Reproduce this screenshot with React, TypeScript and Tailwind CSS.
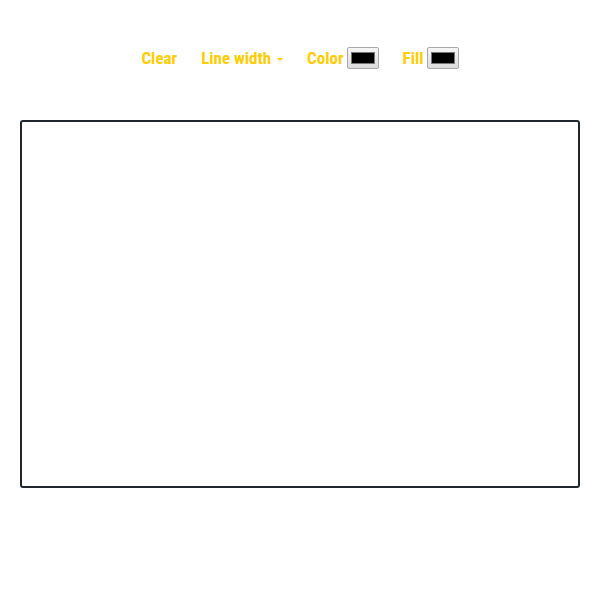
import React from "react";

function Swatch() {
  return (
    <div className="w-[32px] h-[22px] rounded-[2px] border border-[#a9a9a9] bg-gradient-to-b from-[#f6f6f6] to-[#dcdcdc] flex items-center justify-center">
      <div className="w-[24px] h-[12px] bg-black border border-[#777]" />
    </div>
  );
}

export default function App() {
  return (
    <div className="w-[600px] h-[600px] bg-white flex flex-col items-center font-['Roboto',sans-serif] [font-stretch:condensed]">
      <div className="mt-[45px] h-[26px] flex items-center gap-[24px] text-[17px] font-bold text-[#ffcc00] leading-none">
        <span>Clear</span>
        <span className="flex items-center">
          Line width
          <span className="ml-[6px] mt-[2px] w-0 h-0 border-l-[3px] border-r-[3px] border-t-[3px] border-l-transparent border-r-transparent border-t-[#ffcc00]" />
        </span>
        <span className="flex items-center gap-[3px]">
          Color
          <Swatch />
        </span>
        <span className="flex items-center gap-[3px]">
          Fill
          <Swatch />
        </span>
      </div>
      <div className="mt-[49px] w-[560px] h-[368px] border-2 border-[#22262f] rounded-[3px]" />
    </div>
  );
}
